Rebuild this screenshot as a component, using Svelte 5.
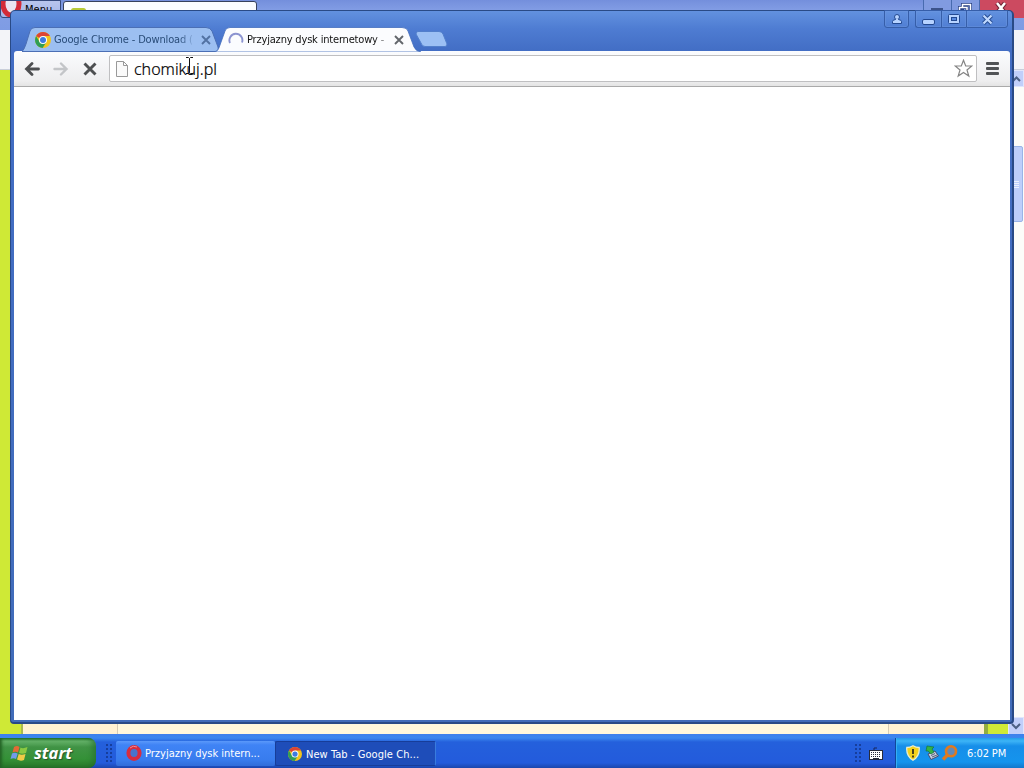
<script>
  const address = 'chomikuj.pl';
</script>

{#snippet chromeLogo(size)}
  <svg width={size} height={size} viewBox="0 0 16 16">
    <circle cx="8" cy="8" r="8" fill="#f2c41d" />
    <path d="M8 8L1.1 4A8 8 0 0 1 14.9 4H8Z" fill="#dc4436" />
    <path d="M1.1 4A8 8 0 0 0 7.6 16L11.4 10 8 8 4.6 10Z" fill="#2f9e56" />
    <circle cx="8" cy="8" r="4" fill="#fff" />
    <circle cx="8" cy="8" r="3" fill="#3c7be0" />
  </svg>
{/snippet}

{#snippet cross(size, color, w)}
  <svg width={size} height={size} viewBox="0 0 10 10"><path d="M1 1L9 9M9 1L1 9" stroke={color} stroke-width={w} fill="none" /></svg>
{/snippet}

<div class="desktop">
  <section class="opera">
    <header class="opera-tabs">
      <div class="opera-menu">
        <svg width="22" height="18" viewBox="0 0 22 18"><ellipse cx="10" cy="3" rx="8" ry="11" fill="#e9e4f0" stroke="#d32b38" stroke-width="5" /></svg>
        <span>Menu</span>
      </div>
      <div class="opera-tab"><i></i></div>
      <div class="opera-controls">
        <span class="oc min"><i></i></span>
        <span class="oc"><svg width="14" height="14" viewBox="0 0 14 14"><path d="M4.5 8V2.500H12.500V10H9M1.500 5.500H9V13H1.500Z" stroke="#263f83" stroke-width="3" fill="none" /><path d="M4.500 5V2.500H12.500V10H9M1.500 5.500H9V13H1.500Z" stroke="#fff" stroke-width="1.500" fill="none" /></svg></span>
        <span class="oc close"><svg width="14" height="12" viewBox="0 0 14 12"><path d="M3 1L11 11M11 1L3 11" stroke="#702436" stroke-width="4.500" /><path d="M3 1L11 11M11 1L3 11" stroke="#fff" stroke-width="2.500" /></svg></span>
      </div>
    </header>
    <div class="opera-bar"></div>
    <div class="opera-page">
      <div class="green"></div>
      <div class="cream"><i></i><i></i><i></i></div>
      <div class="green right"></div>
      <div class="scroll">
        <b class="arrow"><svg width="9" height="6" viewBox="0 0 9 6"><path d="M1 5L4.500 1.500L8 5" /></svg></b>
        <div class="thumb"><i></i><i></i><i></i><i></i></div>
        <b class="arrow down"><svg width="10" height="7" viewBox="0 0 10 7"><path d="M1 1L5 5L9 1" /></svg></b>
      </div>
    </div>
  </section>

  <section class="chrome">
    <div class="tabstrip">
      <div class="tab idle">
        <svg class="shape" width="200" height="25" viewBox="0 0 200 25"><path d="M0 24.500Q2 23 4 17L8 4Q9 .5 13 .5H184Q188 .5 190 4L196 20Q197 24.500 193 24.500Z" fill="#9cbff1" stroke="#4b6fb5" /></svg>
        <div class="favicon">{@render chromeLogo(16)}</div>
        <span class="title t1">Google Chrome - Download (</span>
        <div class="x">{@render cross(10, '#5272a3', 1.9)}</div>
      </div>
      <div class="tab active">
        <svg class="shape" width="208" height="25" viewBox="0 0 208 25"><path d="M0 25C3 24 4 21 5 18L10 4Q11 .5 15 .5H187Q192 .5 193 4L199 20Q201 24.500 206 25Z" fill="#fbfcfe" stroke="#426dbd" stroke-width=".8" /></svg>
        <div class="favicon"><svg width="16" height="16" viewBox="0 0 16 16"><path d="M2 11A6.500 6.500 0 1 1 14 10.500" fill="none" stroke="#8c94d0" stroke-width="1.900" /></svg></div>
        <span class="title t2">Przyjazny dysk internetowy -</span>
        <div class="x">{@render cross(10, '#62666b', 1.9)}</div>
      </div>
      <svg class="newtab" width="33" height="16" viewBox="0 0 33 16"><path d="M3 .5H24Q27 .5 28 3L32 13Q32 15.500 30 15.500H10Q7 15.500 6 12L1 3Q1 .5 3 .5Z" fill="#9cc0f4" stroke="#527fcb" /></svg>
    </div>

    <div class="controls">
      <span class="user"><svg width="12" height="12" viewBox="0 0 12 12"><path d="M1.500 10.500V8.500Q1.500 7 4.500 6.500H7.500Q10.500 7 10.500 8.500V10.500Z" fill="#b7d3ff" stroke="#244a91" /><circle cx="6" cy="4" r="2.500" fill="#b7d3ff" stroke="#244a91" /><path d="M5 6H7V8H5Z" fill="#b7d3ff" /></svg></span>
      <span class="c1"><svg width="13" height="6" viewBox="0 0 13 6"><rect x=".5" y=".5" width="12" height="5" rx="1.500" fill="#b7d3ff" stroke="#244a91" /></svg></span>
      <span class="c2"><svg width="12" height="10" viewBox="0 0 12 10"><rect x=".5" y=".5" width="11" height="9" rx="1" fill="#b7d3ff" stroke="#244a91" /><rect x="3.500" y="3.500" width="5" height="3" fill="#5889df" stroke="#244a91" /></svg></span>
      <span class="c3"><svg width="13" height="11" viewBox="0 0 13 11"><path d="M2.500 1.500L10.500 9.500M10.500 1.500L2.500 9.500" stroke="#244a91" stroke-width="4" /><path d="M2.500 1.500L10.500 9.500M10.500 1.500L2.500 9.500" stroke="#c1d9ff" stroke-width="2.200" /></svg></span>
    </div>

    <div class="toolbar">
      <svg class="back" width="16" height="14" viewBox="0 0 16 14"><path d="M8 1.500L2.500 7L8 12.500M2.500 7H14.500" fill="none" stroke="#4d4f51" stroke-width="2.800" stroke-linecap="round" /></svg>
      <svg class="forward" width="16" height="14" viewBox="0 0 16 14"><path d="M8 1.500L13.500 7L8 12.500M13.500 7H1.500" fill="none" stroke="#c3c5c8" stroke-width="2.400" stroke-linecap="round" /></svg>
      <svg class="stop" width="14" height="14" viewBox="0 0 14 14"><path d="M1.500 1.500L12.500 12.500M12.500 1.500L1.500 12.500" stroke="#4d4f51" stroke-width="2.900" /></svg>
      <div class="address">
        <svg width="12" height="16" viewBox="0 0 12 16"><path d="M.5 .5H7.500L11.500 4.500V15.500H.5ZM7.500 .5V4.500H11.500" fill="#fafafa" stroke="#999" /></svg>
        <span>{address}</span>
        <svg class="star" width="19" height="19" viewBox="0 0 19 19"><path d="M9.500 1.200L11.700 7H17.800L13 11L14.800 17L9.500 13.500L4.200 17L6 11L1.200 7H7.300Z" fill="#fff" stroke="#858585" stroke-width="1.200" /></svg>
      </div>
      <div class="burger"><i></i><i></i><i></i></div>
    </div>
    <main></main>
  </section>

  <svg class="cursor" width="9" height="17" viewBox="0 0 9 17"><path d="M1 .5H3.500L4.500 1.500L5.500 .5H8M4.500 1.500V15.500M1 16.500H3.500L4.500 15.500L5.500 16.500H8" fill="none" stroke="#111" /></svg>

  <footer class="taskbar">
    <div class="start">
      <svg width="19" height="18" viewBox="0 0 19 18">
        <path d="M4 3Q7 1 9.500 3L8 8.500Q5.500 7 2.500 8.500Z" fill="#e46a35" />
        <path d="M10.500 3.500Q13 5 17.500 3L16 9Q12 10.500 9 9Z" fill="#8bc942" />
        <path d="M2 9.500Q5 8 7.700 9.700L6 15Q3.500 13.500 .5 15Z" fill="#719bea" />
        <path d="M8.700 10Q11.500 11.500 15.500 10L14 16Q10.500 17.500 7 15.500Z" fill="#f1cb47" />
      </svg>
      <span>start</span>
    </div>
    <div class="grip"></div>
    <div class="task">
      <svg width="16" height="16" viewBox="0 0 16 16"><ellipse cx="8" cy="8" rx="5.600" ry="6" fill="#4874cd" stroke="#d62d40" stroke-width="4" /><path d="M4 3Q7 0 11 2" stroke="#f08d91" fill="none" /></svg>
      <span class="l1">Przyjazny dysk intern...</span>
    </div>
    <div class="task pressed">
      {@render chromeLogo(14)}
      <span class="l2">New Tab - Google Ch...</span>
    </div>
    <div class="grip two"></div>
    <svg class="keyboard" width="14" height="13" viewBox="0 0 14 13"><path d="M5 3V1H8" fill="none" stroke="#16265d" /><rect x=".5" y="3.500" width="13" height="9" fill="#fff" stroke="#272b3b" /><path d="M2 5.500H12M2 7.500H12M2 9.500H12" stroke="#272b3b" stroke-dasharray="1 1" /><path d="M4 11.500H10" stroke="#272b3b" /></svg>
    <div class="tray">
      <svg width="14" height="16" viewBox="0 0 14 16"><path d="M7 .7Q10 2.500 13.200 2.500Q14 11 7 15.300Q0 11 .8 2.500Q4 2.500 7 .7Z" fill="#f4d21c" stroke="#e9edcc" stroke-width="1.300" /><path d="M7 4V9M7 10.500V12.500" stroke="#37331a" stroke-width="1.800" /></svg>
      <svg width="15" height="16" viewBox="0 0 15 16"><path d="M3 9L10 6L13.500 11L6 14.500Z" fill="#c9cfde" stroke="#444d70" /><path d="M6 10.500L10 8.500M7 12L12 10" stroke="#556079" /><path d="M2 1L9 2L7 4L9 7L6 9L3 6L1 6Z" fill="#34b344" stroke="#177441" stroke-width=".7" /></svg>
      <svg width="17" height="16" viewBox="0 0 17 16"><circle cx="10" cy="6.300" r="5" fill="#6489b5" stroke="#e07a1e" stroke-width="2.600" /><path d="M6.500 10L2 14.500" stroke="#e07a1e" stroke-width="3.400" /></svg>
      <time>6:02 PM</time>
    </div>
  </footer>
</div>

<style>
  :global(body) { margin: 0; overflow: hidden; }
  * { box-sizing: border-box; }
  svg { display: block; flex: none; }
  .desktop { position: relative; width: 1024px; height: 768px; overflow: hidden; font-family: "DejaVu Sans Condensed", "DejaVu Sans", sans-serif; font-size: 11px; display: flex; flex-direction: column; }
  .opera { height: 738px; background: #fff; display: flex; flex-direction: column; }
  .opera-tabs { height: 30px; display: flex; background: linear-gradient(#748fdc, #839ee5 11px, #7e9ce4); }
  .opera-menu { width: 61px; height: 18px; border: 1px solid #35497c; border-radius: 0 0 3px 3px; background: linear-gradient(#b8c5ed, #a4b6e9); display: flex; overflow: hidden; }
  .opera-menu span { margin: 2px 0 0 2px; font-size: 11px; line-height: 13px; }
  .opera-tab { width: 194px; height: 25px; margin: 1px 0 0 2px; border: 1px solid #36415d; border-radius: 3px 3px 0 0; background: #fafcff; }
  .opera-tab i { display: block; width: 15px; height: 5px; margin: 6px 0 0 7px; background: #b7ca38; border-radius: 3px; }
  .opera-controls { display: flex; margin-left: auto; height: 18px; }
  .oc { width: 28px; border-left: 1px solid #486baf; background: #819be0; display: flex; justify-content: center; padding: 2px 2px 0 0; }
  .min i { width: 12px; height: 4px; background: #3c538a; margin-top: 6px; }
  .close { width: 45px; background: #cc4a60; }
  .opera-bar { height: 40px; background: #f3f4f8; border-bottom: 1px solid #c9ceda; }
  .opera-page { flex: 1; display: flex; background: #fff; }
  .green { width: 24px; background: #cfe936; border-right: 2px solid #a9ba4f; }
  .cream { flex: 1; background: #fff2d2; display: flex; }
  .cream i { border-right: 1px solid #d6ccb5; width: 95px; }
  .cream i:nth-child(2) { background: #fff8dc; width: 771px; }
  .cream i:nth-child(3) { border: 0; }
  .right { border-right: 0; border-left: 4px solid #93ae3f; }
  .scroll { width: 16px; background: #fcfcf9; display: flex; flex-direction: column; }
  .arrow { width: 16px; height: 17px; display: flex; align-items: center; justify-content: center; background: #c1cffa; border: 1px solid #e1e6fc; }
  .arrow path { fill: none; stroke: #4d6185; stroke-width: 2; }
  .thumb { margin-top: 59px; height: 76px; width: 15px; background: #bdcefa; border: 1px solid #99b4e7; border-radius: 2px; display: flex; flex-direction: column; gap: 1px; align-items: center; justify-content: center; }
  .thumb i { width: 7px; height: 1px; background: #edf2ff; }
  .down { margin-top: auto; height: 21px; padding-bottom: 3px; }

  .chrome { position: absolute; left: 10px; top: 10px; width: 1004px; height: 714px; border: 1px solid #294a86; border-right-width: 2px; border-bottom-width: 2px; border-radius: 5px 5px 4px 4px; background: linear-gradient(#6291df, #4e7cd2 18px, #426dc4 41px, #416cb9); padding: 0 2px 2px 3px; display: flex; flex-direction: column; }
  .tabstrip { height: 40px; padding: 16px 0 0 8px; display: flex; flex: none; }
  .tab { position: relative; height: 25px; display: flex; align-items: center; }
  .idle { width: 193px; padding-left: 13px; }
  .active { width: 200px; padding-left: 13px; z-index: 1; }
  .shape { position: absolute; left: 0; top: 0; }
  .favicon, .title, .x { position: relative; }
  .title { white-space: nowrap; height: 18px; line-height: 18px; margin-left: 3px; -webkit-mask-image: linear-gradient(90deg, #000 90%, transparent 102%); mask-image: linear-gradient(90deg, #000 90%, transparent 102%); }
  .t1 { color: #294c78; width: 139px; letter-spacing: -.16px; }
  .t2 { color: #111; width: 142px; margin-left: 3px; letter-spacing: -.18px; }
  .x { margin-left: auto; margin-right: 4px; }
  .active .x { margin-right: 11px; }
  .newtab { margin-top: 4px; }
  .controls { position: absolute; right: 4px; top: -1px; display: flex; height: 18px; }
  .controls span { border: 1px solid #365ea9; box-shadow: inset 0 0 0 1px #7198de66; display: flex; align-items: center; justify-content: center; }
  .controls .user { width: 25px; margin-right: 6px; border-radius: 0 0 3px 3px; }
  .controls .c1 { width: 26px; border-right: 0; border-radius: 0 0 0 3px; padding-top: 5px; }
  .controls .c2 { width: 25px; border-right: 0; }
  .controls .c3 { width: 42px; border-radius: 0 0 3px; }
  .toolbar { height: 36px; flex: none; background: linear-gradient(#fbfcfe, #eeeeef 85%, #e4e4e4); border-radius: 3px 3px 0 0; border-bottom: 1px solid #aaa; display: flex; align-items: center; padding: 0 11px 0 10px; }
  .forward { margin-left: 13px; }
  .stop { margin-left: 14px; }
  .address { margin-left: 12px; width: 868px; height: 27px; border: 1px solid #bfbfc1; border-radius: 2px; background: #fff; display: flex; align-items: center; padding: 0 3px 0 6px; }
  .address span { margin-left: 6px; font-family: "Noto Sans", sans-serif; font-weight: 300; font-size: 16px; line-height: 20px; color: #000; -webkit-text-stroke: .2px #000; }
  .star { margin-left: auto; }
  .burger { margin-left: 9px; width: 13px; display: flex; flex-direction: column; gap: 2px; }
  .burger i { height: 3px; background: #515356; border-radius: 1px; }
  main { flex: 1; background: #fff; }
  .cursor { position: absolute; left: 185px; top: 57px; }

  .taskbar { position: absolute; left: 0; bottom: 0; width: 1024px; height: 34px; display: flex; align-items: flex-end; background: linear-gradient(#3e80ec, #3a87ef 4px, #2460dc 8px, #235bdc 85%, #1b46ac); color: #fff; }
  .start { width: 96px; height: 30px; border-radius: 0 8px 8px 0; background: linear-gradient(#277c2b, #66b36a 3px, #409345 9px, #349137 70%, #287729); box-shadow: inset -4px 0 5px #226b2b88, inset 2px 0 3px #246326; display: flex; align-items: center; padding-left: 10px; }
  .start span { margin: -1px 0 0 5px; font: italic bold 16.5px/20px "Open Sans", sans-serif; text-shadow: 1px 1px 1px #24522a; }
  .grip { width: 6px; height: 20px; margin: 0 4px 4px 10px; background-image: radial-gradient(circle at 1px 1px, #163e9d 1px, transparent 1.300px); background-size: 4px 4px; }
  .task { height: 25px; width: 159px; margin-bottom: 2px; background: linear-gradient(#5b99fa, #3f83f5 4px, #387cee 75%, #316dd9); border-radius: 2px; display: flex; align-items: center; padding: 0 0 1px 10px; white-space: nowrap; }
  .task span { margin-left: 3px; }
  .pressed { width: 161px; background: #1e4db9; border: 1px solid #173d99; border-right-color: #397cde; padding: 1px 0 0 12px; }
  .l1 { letter-spacing: 0; }
  .l2 { letter-spacing: .06px; }
  .pressed span { margin-left: 4px; }
  .two { margin-left: auto; margin-right: 8px; }
  .keyboard { margin: 0 12px 8px 0; }
  .tray { width: 129px; height: 30px; border-left: 1px solid #10479a; box-shadow: inset 1px 0 #35aff4; background: linear-gradient(#229ee9, #3db4f6 3px, #168ee9 8px, #1594ed 80%, #1377cb); display: flex; align-items: center; padding-left: 10px; }
  .tray svg:nth-child(2) { margin-left: 5px; }
  .tray svg:nth-child(3) { margin-left: 1px; }
  .tray time { margin-left: 9px; letter-spacing: -.1px; }
</style>
